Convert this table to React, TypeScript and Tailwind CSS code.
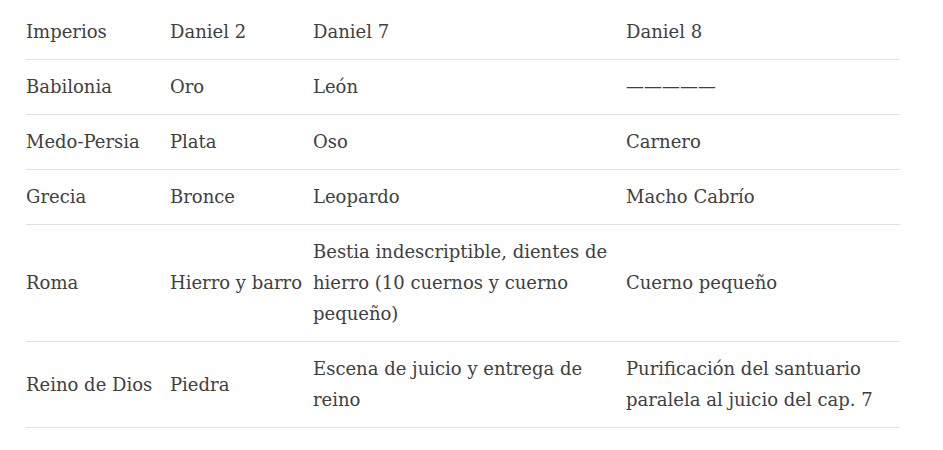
export default function App() {
  const rows: [string, string, string, string][] = [
    ["Babilonia", "Oro", "León", "—————"],
    ["Medo-Persia", "Plata", "Oso", "Carnero"],
    ["Grecia", "Bronce", "Leopardo", "Macho Cabrío"],
    ["Roma", "Hierro y barro", "Bestia indescriptible, dientes de hierro (10 cuernos y cuerno pequeño)", "Cuerno pequeño"],
    ["Reino de Dios", "Piedra", "Escena de juicio y entrega de reino", "Purificación del santuario paralela al juicio del cap. 7"],
  ];
  const cell = "pt-[11px] pb-[12px] pr-[10px] align-middle text-left font-normal";
  return (
    <div className="bg-white w-[943px] h-[450px] pt-[5px] pl-[26px]" style={{ fontFamily: '"DejaVu Serif", serif' }}>
      <table className="w-[874px] table-fixed border-collapse text-[18px] leading-[31px] text-[#404040]">
        <colgroup>
          <col className="w-[144px]" />
          <col className="w-[143px]" />
          <col className="w-[313px]" />
          <col className="w-[274px]" />
        </colgroup>
        <thead>
          <tr className="border-b border-[#e1e1e1]">
            <th className={cell}>Imperios</th>
            <th className={cell}>Daniel 2</th>
            <th className={cell}>Daniel 7</th>
            <th className={cell}>Daniel 8</th>
          </tr>
        </thead>
        <tbody>
          {rows.map((r, i) => (
            <tr key={i} className="border-b border-[#e1e1e1]">
              {r.map((c, j) => (
                <td key={j} className={cell}>{c}</td>
              ))}
            </tr>
          ))}
        </tbody>
      </table>
    </div>
  );
}
